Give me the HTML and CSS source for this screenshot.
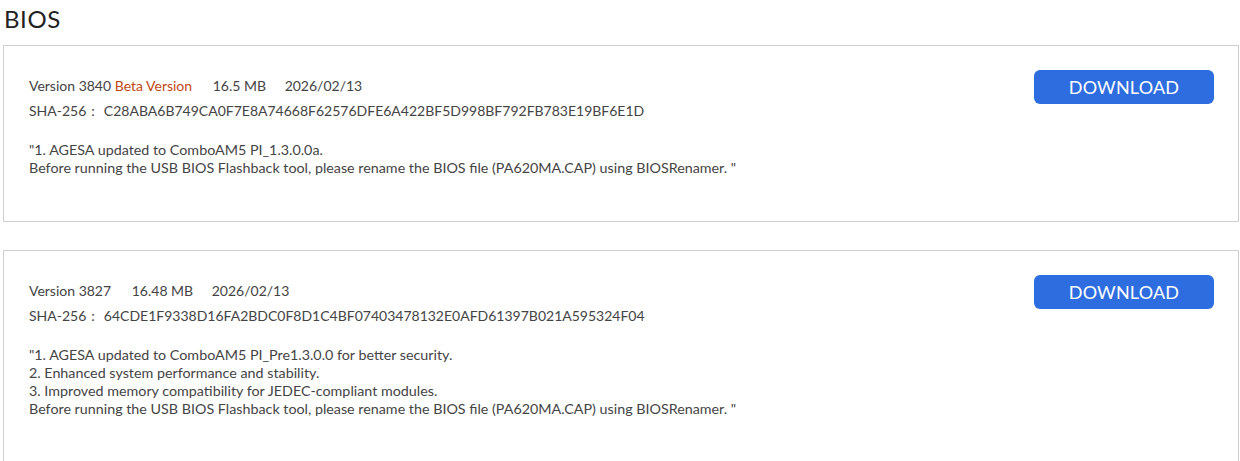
FILE: index.html
```html
<!DOCTYPE html>
<html lang="en">
<head>
<meta charset="utf-8">
<title>BIOS</title>
<link rel="stylesheet" href="styles.css">
</head>
<body>
<main class="page">
  <h1 class="section-title">BIOS</h1>
  <div class="card-list">
    <section class="card">
      <div class="card-info">
        <div class="meta">
          <span>Version 3840</span> <span class="beta">Beta Version</span>
          <span class="size">16.5 MB</span>
          <span class="date">2026/02/13</span>
        </div>
        <div class="sha">SHA-256<span class="sep">:</span>C28ABA6B749CA0F7E8A74668F62576DFE6A422BF5D998BF792FB783E19BF6E1D</div>
        <div class="desc">"1. AGESA updated to ComboAM5 PI_1.3.0.0a.<br>Before running the USB BIOS Flashback tool, please rename the BIOS file (PA620MA.CAP) using BIOSRenamer. "</div>
      </div>
      <button class="download">DOWNLOAD</button>
    </section>
    <section class="card">
      <div class="card-info">
        <div class="meta">
          <span>Version 3827</span>
          <span class="size">16.48 MB</span>
          <span class="date">2026/02/13</span>
        </div>
        <div class="sha">SHA-256<span class="sep">:</span>64CDE1F9338D16FA2BDC0F8D1C4BF07403478132E0AFD61397B021A595324F04</div>
        <div class="desc">"1. AGESA updated to ComboAM5 PI_Pre1.3.0.0 for better security.<br>2. Enhanced system performance and stability.<br>3. Improved memory compatibility for JEDEC-compliant modules.<br>Before running the USB BIOS Flashback tool, please rename the BIOS file (PA620MA.CAP) using BIOSRenamer. "</div>
      </div>
      <button class="download">DOWNLOAD</button>
    </section>
  </div>
</main>
</body>
</html>
```

FILE: styles.css
```css
* { box-sizing: border-box; }
html, body { margin: 0; padding: 0; background: #fff; }
body {
  font-family: Lato, "Noto Sans", "Noto Sans CJK SC", sans-serif;
  color: #444;
}
.page {
  padding: 4px 1px 0 3px;
}
.section-title {
  margin: 0 0 11px 1px;
  font-size: 24px;
  line-height: 30px;
  font-weight: 400;
  letter-spacing: 0.6px;
  color: #222;
}
.card-list {
  display: flex;
  flex-direction: column;
  gap: 28px;
}
.card {
  border: 1px solid #cfcfcf;
  display: flex;
  justify-content: space-between;
  align-items: flex-start;
  padding: 24px 24px 44px 25px;
}
.card-info {
  padding-top: 4px;
  font-size: 14px;
}
.meta, .sha {
  line-height: 24px;
  white-space: nowrap;
}
.sha { margin-top: 1px; }
.sep {
  margin: 0 9px 0 5px;
}
.beta { color: #c1470f; }
.size { margin-left: 17px; }
.date { margin-left: 15px; }
.desc {
  margin-top: 18px;
  line-height: 18px;
  font-size: 14.3px;
}
.download {
  width: 180px;
  height: 34px;
  border: 0;
  border-radius: 6px;
  background: #2e6ddf;
  color: #fff;
  font-family: Lato, "Noto Sans", sans-serif;
  font-size: 18px;
  letter-spacing: 0.2px;
  padding: 0;
  cursor: pointer;
}
```
